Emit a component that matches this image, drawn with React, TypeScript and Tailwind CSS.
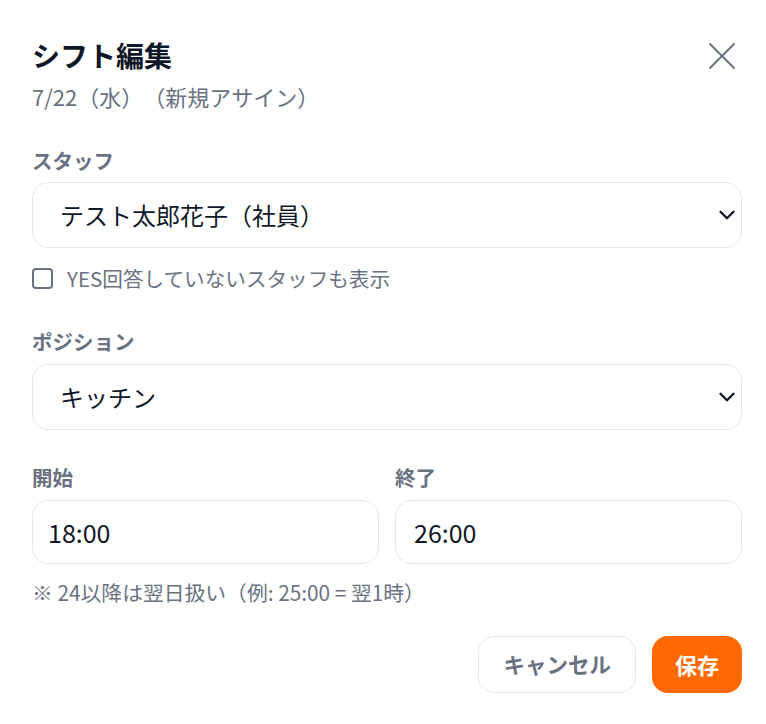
import { useState } from 'react';
import { X, ChevronDown } from 'lucide-react';

const FONT = { fontFamily: '"Noto Sans CJK JP", sans-serif' };

function Label({ children }: { children: React.ReactNode }) {
  return <label className="block text-[20.5px] font-bold leading-[28px] text-gray-500">{children}</label>;
}

export default function App() {
  const [staff, setStaff] = useState('1');
  const [position, setPosition] = useState('kitchen');
  const [showAll, setShowAll] = useState(false);
  const [start, setStart] = useState('18:00');
  const [end, setEnd] = useState('26:00');

  return (
    <div style={FONT} className="min-h-[724px] w-[766px] bg-white pl-8 pr-6 pt-[37px] text-gray-900 [text-spacing-trim:space-all]">
      <div className="flex items-start justify-between">
        <div>
          <h2 className="text-[28px] font-bold leading-[36px] text-gray-900">シフト編集</h2>
          <p className="mt-[9px] text-[22px] leading-[28px] text-gray-500">7/22（水）（新規アサイン）</p>
        </div>
        <button type="button" className="-mr-[4px] -mt-[5px] text-gray-500">
          <X className="h-[48px] w-[48px]" strokeWidth={1} />
        </button>
      </div>

      <div className="mt-[36px]">
        <Label>スタッフ</Label>
        <div className="relative mt-[8px]">
          <select
            className="h-[66px] w-full appearance-none rounded-2xl border border-gray-200 bg-white pl-[27px] pr-12 text-[24px] text-gray-900 focus:outline-none"
            value={staff}
            onChange={(e) => setStaff(e.target.value)}
          >
            <option value="1">テスト太郎花子（社員）</option>
          </select>
          <ChevronDown className="pointer-events-none absolute right-[2px] top-1/2 h-[26px] w-[26px] -translate-y-1/2 text-gray-900" strokeWidth={2.2} />
        </div>
        <label className="mt-[16px] flex h-[28px] items-center gap-[14px]">
          <input
            type="checkbox"
            checked={showAll}
            onChange={(e) => setShowAll(e.target.checked)}
            className="h-[21px] w-[21px] appearance-none rounded-[4px] border-2 border-gray-500 bg-white"
          />
          <span className="text-[20.6px] leading-[28px] text-gray-500">YES回答していないスタッフも表示</span>
        </label>
      </div>

      <div className="mt-[35px]">
        <Label>ポジション</Label>
        <div className="relative mt-[9px]">
          <select
            className="h-[66px] w-full appearance-none rounded-2xl border border-gray-200 bg-white pl-[27px] pr-12 text-[24px] text-gray-900 focus:outline-none"
            value={position}
            onChange={(e) => setPosition(e.target.value)}
          >
            <option value="kitchen">キッチン</option>
          </select>
          <ChevronDown className="pointer-events-none absolute right-[2px] top-1/2 h-[26px] w-[26px] -translate-y-1/2 text-gray-900" strokeWidth={2.2} />
        </div>
      </div>

      <div className="mt-[33px] grid grid-cols-2 gap-4">
        <div>
          <Label>開始</Label>
          <input
            className="mt-[9px] h-[64px] w-full rounded-2xl border border-gray-200 px-[15px] text-[25px] text-gray-900 focus:outline-none"
            value={start}
            onChange={(e) => setStart(e.target.value)}
          />
        </div>
        <div>
          <Label>終了</Label>
          <input
            className="mt-[9px] h-[64px] w-full rounded-2xl border border-gray-200 px-[18px] text-[25px] text-gray-900 focus:outline-none"
            value={end}
            onChange={(e) => setEnd(e.target.value)}
          />
        </div>
      </div>
      <p className="mt-[14px] text-[20.8px] leading-[28px] text-gray-500">※ 24以降は翌日扱い（例: 25:00 = 翌1時）</p>

      <div className="mt-[30px] flex justify-end gap-4">
        <button
          type="button"
          className="h-[57px] rounded-2xl border border-gray-200 bg-white px-[24px] text-[21.5px] font-bold text-gray-500"
        >
          キャンセル
        </button>
        <button
          type="button"
          className="h-[57px] rounded-2xl bg-orange-500 px-[23px] text-[22px] font-bold text-white"
        >
          保存
        </button>
      </div>
    </div>
  );
}
